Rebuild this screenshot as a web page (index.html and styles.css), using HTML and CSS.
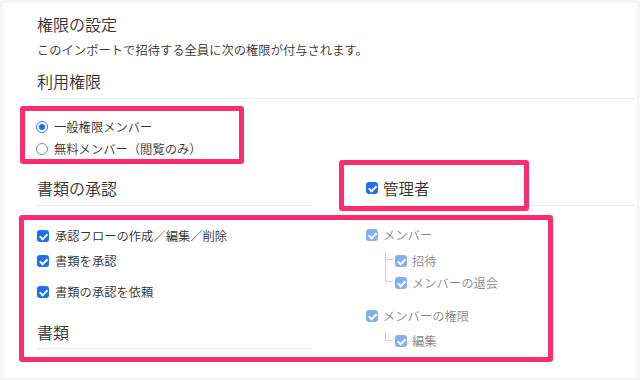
FILE: index.html
```html
<!DOCTYPE html>
<html lang="ja">
<head>
<meta charset="utf-8">
<title>権限の設定</title>
<link rel="stylesheet" href="styles.css">
</head>
<body>
<div class="card">
  <h1 class="title">権限の設定</h1>
  <p class="desc">このインポートで招待する全員に次の権限が付与されます。</p>
  <h2 class="section-head">利用権限</h2>
  <ul class="radios">
    <li class="row"><span class="radio checked"></span><span class="label">一般権限メンバー</span></li>
    <li class="row"><span class="radio"></span><span class="label">無料メンバー（閲覧のみ）</span></li>
  </ul>
  <div class="columns">
    <div class="col">
      <h2 class="col-head">書類の承認</h2>
      <ul class="checks">
        <li class="row r1"><span class="cb"></span><span class="label">承認フローの作成／編集／削除</span></li>
        <li class="row r2"><span class="cb"></span><span class="label">書類を承認</span></li>
        <li class="row r3"><span class="cb"></span><span class="label">書類の承認を依頼</span></li>
      </ul>
      <h2 class="col-head docs">書類</h2>
    </div>
    <div class="col">
      <div class="col-head admin"><span class="cb"></span><span class="admin-label">管理者</span></div>
      <ul class="tree">
        <li class="row t1 off"><span class="cb"></span><span class="label">メンバー</span></li>
        <li class="row t2 off child first"><span class="cb"></span><span class="label">招待</span></li>
        <li class="row t3 off child next"><span class="cb"></span><span class="label">メンバーの退会</span></li>
        <li class="row t4 off"><span class="cb"></span><span class="label">メンバーの権限</span></li>
        <li class="row t5 off child only"><span class="cb"></span><span class="label">編集</span></li>
      </ul>
    </div>
  </div>
  <div class="mark mark-radio"></div>
  <div class="mark mark-admin"></div>
  <div class="mark mark-perms"></div>
</div>
</body>
</html>
```
FILE: styles.css
```css
* { box-sizing: border-box; }
html, body { margin: 0; padding: 0; }
body {
  background: #f5f5f5;
  font-family: "Noto Sans CJK JP", "Noto Sans", sans-serif;
  font-weight: 350;
  color: #333;
  width: 640px;
  height: 380px;
  overflow: hidden;
}
.card {
  position: relative;
  margin: 3px;
  width: 634px;
  height: 374px;
  background: #fff;
  padding: 9px 0 0 34px;
}
.title {
  margin: 0;
  font-size: 16px;
  line-height: 24px;
  font-weight: 350;
}
.desc {
  margin: 5px 0 0;
  font-size: 12.3px;
  line-height: 18px;
}
.section-head {
  margin: 10px 0 0;
  font-size: 16px;
  line-height: 24px;
  font-weight: 350;
  padding-bottom: 5px;
  border-bottom: 1px solid #ececec;
}
ul { list-style: none; margin: 0; padding: 0; }
.radios { margin-top: 17px; }
.row {
  position: relative;
  display: flex;
  align-items: center;
  height: 22px;
  font-size: 12.3px;
}
.label { margin-left: 6px; }
.radio {
  width: 12px;
  height: 12px;
  border-radius: 50%;
  border: 1px solid #8a8a8a;
  background: #fff;
  margin-left: -1px;
  position: relative;
}
.radio.checked {
  border: 1.5px solid #2a7bf2;
  background: #fff;
}
.radio.checked::after {
  content: "";
  position: absolute;
  left: 1.5px; top: 1.5px;
  width: 6px; height: 6px;
  border-radius: 50%;
  background: #1c6ff0;
}
.columns {
  margin-top: 16px;
  display: grid;
  grid-template-columns: 275px 1fr;
  column-gap: 54px;
}
.col-head {
  margin: 0;
  font-size: 16px;
  line-height: 24px;
  font-weight: 350;
  padding-bottom: 5px;
  border-bottom: 1px solid #ececec;
}
.col-head.admin {
  display: flex;
  align-items: center;
  font-size: 15.5px;
}
.admin-label { margin-left: 5px; }
.docs { margin-top: 17px; padding-bottom: 4px; }
.cb {
  position: relative;
  flex: none;
  width: 12px;
  height: 12px;
  border-radius: 3px;
  background: #1e70f0;
}
.cb::after {
  content: "";
  position: absolute;
  left: 4.2px;
  top: 1.6px;
  width: 3.2px;
  height: 6.4px;
  border: solid #fff;
  border-width: 0 2px 2px 0;
  transform: rotate(45deg);
}
.r1 { margin-top: 19px; }
.r2 { margin-top: 3px; }
.r3 { margin-top: 9px; }
.tree .label { margin-left: 5px; }
.off { color: #8a8a8a; }
.off .cb { background: #84b0f3; }
.t1 { margin-top: 18px; }
.t2 { margin-top: 4px; }
.t4 { margin-top: 11px; }
.t5 { margin-top: 3px; }
.child { padding-left: 29px; }
.child::before {
  content: "";
  position: absolute;
  left: 19px;
  width: 7px;
  border-left: 1px solid #cfcfcf;
  border-bottom: 1px solid #cfcfcf;
}
.child.first::before { top: 2px; height: 7px; }
.child.next::before { top: -14px; height: 23px; }
.child.only::before { top: 2px; height: 8px; }
.mark {
  position: absolute;
  border: 5px solid #fd2e6d;
  border-radius: 3px;
}
.mark-radio { left: 17px; top: 103px; width: 224px; height: 58px; }
.mark-admin { left: 336px; top: 157px; width: 190px; height: 51px; }
.mark-perms { left: 16px; top: 212px; width: 534px; height: 147px; }
```
